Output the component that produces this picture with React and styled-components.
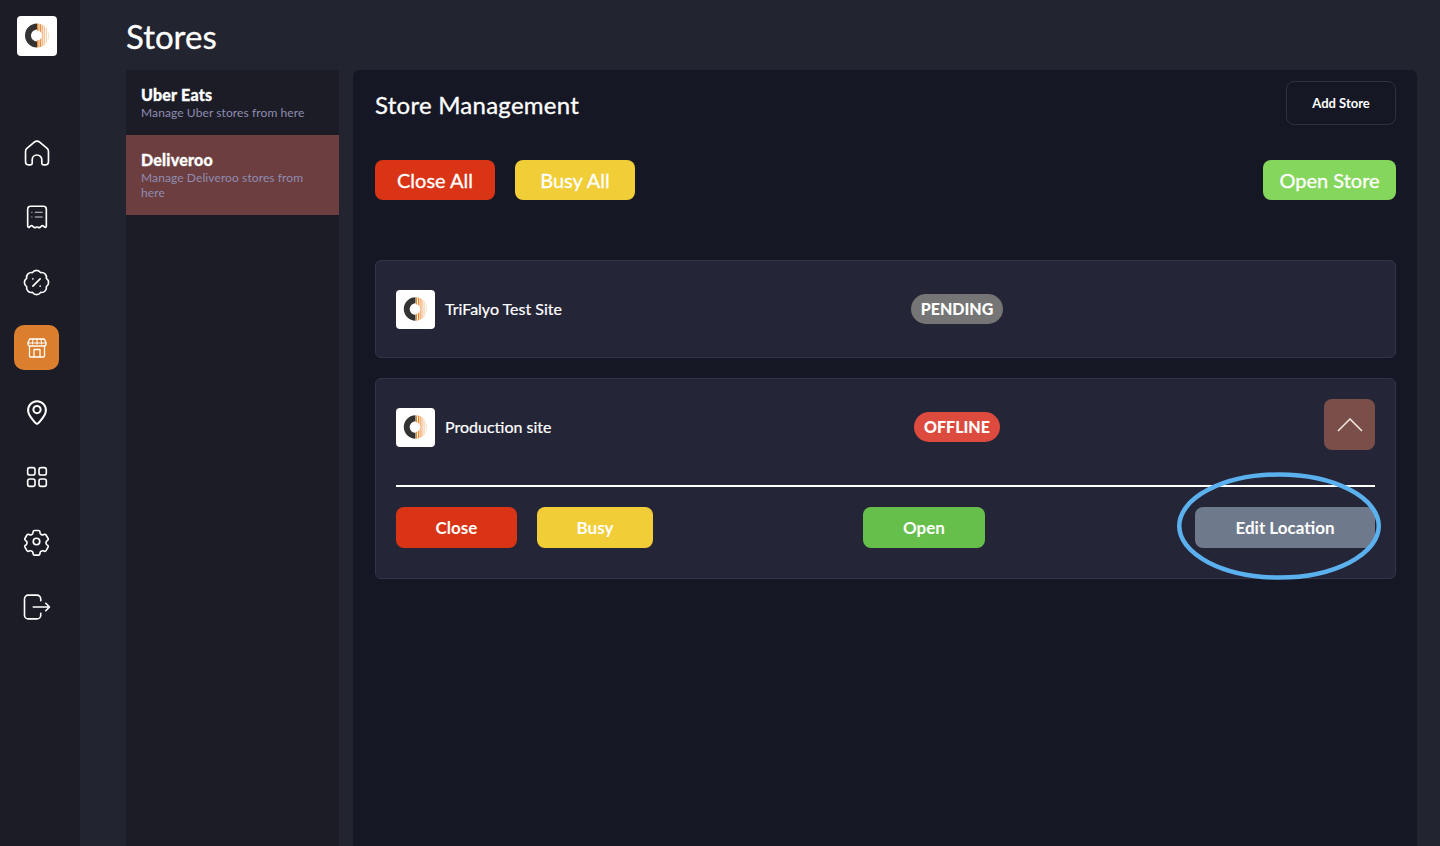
import React from "react";
import styled, { createGlobalStyle } from "styled-components";

const GlobalStyle = createGlobalStyle`
  html, body { margin: 0; padding: 0; height: 100%; background: #22242f; }
  body { font-family: Lato, "Open Sans", sans-serif; overflow: hidden; }
  #root { height: 100%; }
  * { box-sizing: border-box; }
`;

const Logo = ({ size = 40, id = "ring" }) => (
  <LogoBox $size={size}>
    <svg viewBox="0 0 40 40" width={size} height={size}>
      <defs>
        <clipPath id={id}>
          <path d="M20 7.500a12 12 0 0 1 0 24v-7a5 5 0 0 0 0-10z" />
        </clipPath>
      </defs>
      <path d="M20 7.500a12 12 0 0 0 0 24v-6a6 6 0 0 1 0-12z" fill="#333" />
      <g clipPath={`url(#${id})`}>
        <rect x="20" y="7" width="1.600" height="25" fill="#e8872c" />
        <rect x="22.500" y="7" width="1.400" height="25" fill="#e8872c" />
        <rect x="24.400" y="7" width="2" height="25" fill="#f2b98a" />
        <rect x="27" y="7" width="1.200" height="25" fill="#f4c49c" />
        <rect x="29" y="7" width="1" height="25" fill="#f7d3b2" />
        <rect x="31" y="7" width="1" height="25" fill="#f9e0cb" />
      </g>
    </svg>
  </LogoBox>
);

const iconProps = {
  viewBox: "0 0 24 24",
  fill: "none",
  stroke: "currentColor",
  strokeLinecap: "round",
  strokeLinejoin: "round",
};

const HomeIcon = () => (
  <svg {...iconProps} width="32" height="32" strokeWidth="1.250">
    <path d="M4.400 8.600 10 3.900a3.100 3.100 0 0 1 4 0l5.600 4.700c.7.600 1 1.400 1 2.300v7.400c0 1.500-1.100 2.600-2.600 2.600h-1.200c-.7 0-1.200-.5-1.200-1.200v-2.600a3.600 3.600 0 0 0-7.200 0v2.600c0 .7-.5 1.200-1.200 1.200H6c-1.500 0-2.600-1.100-2.600-2.600v-7.400c0-.9.300-1.700 1-2.300z" />
  </svg>
);

const ReceiptIcon = () => (
  <svg {...iconProps} width="28" height="28" strokeWidth="1.400">
    <path d="M6.500 2.800h11A2.500 2.500 0 0 1 20 5.300V20c0 .8-.9 1.200-1.500.7l-.9-.8a1.400 1.400 0 0 0-1.900 0l-.6.6c-.6.600-1.500.800-2.200.3-.5-.3-1.300-.3-1.800 0-.7.500-1.600.300-2.200-.3l-.6-.6a1.400 1.400 0 0 0-1.900 0l-.9.800C5 21.200 4 20.800 4 20V5.300a2.500 2.500 0 0 1 2.500-2.500z" />
    <path d="M10.500 8h6M10.500 12h6M7.500 8h.2M7.500 12h.2" strokeWidth="0.900" opacity="0.8" />
  </svg>
);

const OffersIcon = () => (
  <svg {...iconProps} width="29" height="29" strokeWidth="1.350">
    <path d="M3.850 8.620a4 4 0 0 1 4.780-4.770 4 4 0 0 1 6.740 0 4 4 0 0 1 4.780 4.780 4 4 0 0 1 0 6.740 4 4 0 0 1-4.770 4.780 4 4 0 0 1-6.750 0 4 4 0 0 1-4.780-4.770 4 4 0 0 1 0-6.760z" />
    <path d="m15 9-6 6M9 9h.01M15 15h.01" />
  </svg>
);

const StoreIcon = () => (
  <svg viewBox="0 0 20 20" width="20" height="20" fill="none" stroke="currentColor" strokeWidth="1.300" strokeLinecap="round" strokeLinejoin="round">
    <path d="M3.500 1h13a1.500 1.500 0 0 1 1.400 1L19 5v1a2 2 0 0 1-2 2H3a2 2 0 0 1-2-2V5l1.100-3a1.500 1.500 0 0 1 1.400-1z" />
    <path d="M1 5h18M6 1 5.500 5v1M10 1v5M14 1l.5 4v1" strokeWidth="1" />
    <path d="M2.500 8v10a1 1 0 0 0 1 1h13a1 1 0 0 0 1-1V8M7 19v-7.500h6V19" />
  </svg>
);

const PinIcon = () => (
  <svg {...iconProps} width="30" height="30" strokeWidth="1.600">
    <path d="M12 21.500c-1 0-6.500-6.300-7-9.800a7.100 7.100 0 1 1 14 0c-.5 3.500-6 9.800-7 9.800z" />
    <circle cx="12" cy="10" r="2.900" />
  </svg>
);

const GridIcon = () => (
  <svg {...iconProps} width="28" height="28" strokeWidth="1.400">
    <rect x="4" y="4" width="6.300" height="6.300" rx="1.800" />
    <rect x="13.700" y="4" width="6.300" height="6.300" rx="1.800" />
    <rect x="4" y="13.700" width="6.300" height="6.300" rx="1.800" />
    <rect x="13.700" y="13.700" width="6.300" height="6.300" rx="1.800" />
  </svg>
);

const GearIcon = () => (
  <svg {...iconProps} width="29" height="29" strokeWidth="1.350">
    <circle cx="12" cy="12" r="2.700" />
    <path d="M10.300 2.900h3.400c.6 0 1 .4 1.100 1l.2 1.200c.1.400.3.700.6.900l.7.400c.3.200.7.200 1.100.1l1.100-.4c.5-.2 1.100 0 1.400.5l1.700 2.900c.3.500.2 1.100-.3 1.400l-.9.800c-.3.200-.5.600-.5 1v.8c0 .4.200.8.500 1l.9.800c.5.300.6.900.3 1.400l-1.700 2.900c-.3.500-.9.700-1.400.5l-1.100-.4c-.4-.1-.8-.1-1.100.1l-.7.400c-.3.200-.5.500-.6.900l-.2 1.200c-.1.600-.5 1-1.100 1h-3.400c-.6 0-1-.4-1.100-1l-.2-1.200c-.1-.4-.3-.7-.6-.9l-.7-.4c-.3-.2-.7-.2-1.100-.1l-1.100.4c-.5.200-1.100 0-1.400-.5l-1.700-2.900c-.3-.5-.2-1.100.3-1.400l.9-.8c.3-.2.500-.6.500-1v-.8c0-.4-.2-.8-.5-1l-.9-.8c-.5-.3-.6-.9-.3-1.400l1.700-2.900c.3-.5.9-.7 1.400-.5l1.100.4c.4.100.8.100 1.100-.1l.7-.4c.3-.2.500-.5.600-.9l.2-1.200c.1-.6.500-1 1.100-1z" />
  </svg>
);

const LogoutIcon = () => (
  <svg {...iconProps} width="30" height="30" strokeWidth="1.300">
    <path d="M15 7V5.500a3 3 0 0 0-3-3H5a3 3 0 0 0-3 3v13a3 3 0 0 0 3 3h7a3 3 0 0 0 3-3V17" />
    <path d="M9 12h13M19 9l3 3-3 3" />
  </svg>
);

const navItems = [
  { key: "home", icon: <HomeIcon /> },
  { key: "orders", icon: <ReceiptIcon />, lift: true },
  { key: "offers", icon: <OffersIcon /> },
  { key: "stores", icon: <StoreIcon />, active: true },
  { key: "locations", icon: <PinIcon />, lift: true },
  { key: "apps", icon: <GridIcon />, lift: true },
  { key: "settings", icon: <GearIcon />, lift: true },
  { key: "logout", icon: <LogoutIcon />, lift: true },
];

const stores = [
  { id: 1, name: "TriFalyo Test Site", status: "PENDING", tone: "#757575" },
  { id: 2, name: "Production site", status: "OFFLINE", tone: "#dd4b3e", open: true },
];

export default function App() {
  return (
    <>
      <GlobalStyle />
      <Page>
        <Sidebar>
          <Logo id="ring-main" />
          <Nav>
            {navItems.map((item) => (
              <NavItem key={item.key} $active={item.active} $lift={item.lift}>
                {item.icon}
              </NavItem>
            ))}
          </Nav>
        </Sidebar>
        <Content>
          <Title>Stores</Title>
          <Columns>
            <Platforms>
              <Platform>
                <PlatformName>Uber Eats</PlatformName>
                <PlatformHint>Manage Uber stores from here</PlatformHint>
              </Platform>
              <Platform $active>
                <PlatformName>Deliveroo</PlatformName>
                <PlatformHint>Manage Deliveroo stores from here</PlatformHint>
              </Platform>
            </Platforms>
            <Main>
              <MainHeader>
                <MainTitle>Store Management</MainTitle>
                <AddStore>Add Store</AddStore>
              </MainHeader>
              <BulkRow>
                <BulkGroup>
                  <BulkButton $bg="#d93415">Close All</BulkButton>
                  <BulkButton $bg="#f1cd38">Busy All</BulkButton>
                </BulkGroup>
                <BulkButton $bg="#85d65c" $wide>Open Store</BulkButton>
              </BulkRow>
              <Cards>
                {stores.map((store) => (
                  <Card key={store.id}>
                    <CardRow>
                      <StoreName>
                        <Logo size={39} id={`ring-${store.id}`} />
                        <span>{store.name}</span>
                      </StoreName>
                      <PillCell>
                        <Pill $bg={store.tone}>{store.status}</Pill>
                      </PillCell>
                      {store.open && (
                        <Chevron aria-label="Collapse">
                          <svg width="26" height="14" viewBox="0 0 26 14" fill="none" stroke="#f3e9e4" strokeWidth="1.500">
                            <path d="M1 13 13 1l12 12" />
                          </svg>
                        </Chevron>
                      )}
                    </CardRow>
                    {store.open && (
                      <>
                        <Divider />
                        <ActionRow>
                          <ActionGroup>
                            <ActionButton $bg="#d93415" $w={121}>Close</ActionButton>
                            <ActionButton $bg="#f1cd38" $w={116}>Busy</ActionButton>
                          </ActionGroup>
                          <ActionButton $bg="#66bf4b" $w={122}>Open</ActionButton>
                          <EditWrap>
                            <ActionButton $bg="#6f798c" $w={180}>Edit Location</ActionButton>
                            <Highlight viewBox="0 0 206 110" fill="none">
                              <ellipse cx="103" cy="55" rx="99.750" ry="51.500" stroke="#5bb1ee" strokeWidth="4.500" />
                            </Highlight>
                          </EditWrap>
                        </ActionRow>
                      </>
                    )}
                  </Card>
                ))}
              </Cards>
            </Main>
          </Columns>
        </Content>
      </Page>
    </>
  );
}

const Page = styled.div`
  display: flex;
  height: 846px;
  overflow: hidden;
  color: #fff;
`;

const Sidebar = styled.aside`
  width: 80px;
  flex-shrink: 0;
  background: #1c1c27;
  display: flex;
  flex-direction: column;
  align-items: center;
  padding: 16px 7px 0 0;
`;

const LogoBox = styled.div`
  width: ${(p) => p.$size}px;
  height: ${(p) => p.$size}px;
  flex-shrink: 0;
  background: #fff;
  border-radius: 4px;
  overflow: hidden;
  svg { display: block; }
`;

const Nav = styled.nav`
  margin-top: 74px;
  display: flex;
  flex-direction: column;
  gap: 20px;
`;

const NavItem = styled.div`
  width: 45px;
  height: 45px;
  padding-bottom: ${(p) => (p.$lift ? "2px" : "0")};
  border-radius: 10px;
  display: flex;
  align-items: center;
  justify-content: center;
  color: #fff;
  background: ${(p) => (p.$active ? "#db7f2e" : "transparent")};
`;

const Content = styled.div`
  flex: 1;
  min-width: 0;
  padding: 0 23px 0 46px;
  display: flex;
  flex-direction: column;
`;

const Title = styled.h1`
  margin: 0;
  height: 70px;
  display: flex;
  align-items: center;
  padding-top: 2px;
  font-size: 33px;
  font-weight: 400;
  -webkit-text-stroke: 0.3px #fff;
  color: #fff;
`;

const Columns = styled.div`
  flex: 1;
  display: grid;
  grid-template-columns: 213px 1fr;
  gap: 14px;
`;

const Platforms = styled.div`
  background: #1c1c27;
`;

const Platform = styled.div`
  padding: 16px 15px 15px;
  background: ${(p) => (p.$active ? "#6c3e40" : "transparent")};
`;

const PlatformName = styled.div`
  font-size: 16px;
  line-height: 18px;
  font-weight: 900;
  letter-spacing: 0.2px;
  -webkit-text-stroke: 0.3px #fff;
  color: #fff;
`;

const PlatformHint = styled.div`
  margin-top: 1px;
  font-size: 12px;
  line-height: 15px;
  letter-spacing: 0.1px;
  color: #8f8db0;
`;

const Main = styled.main`
  background: #151824;
  border-radius: 6px 6px 0 0;
  padding: 11px 21px 0 22px;
`;

const MainHeader = styled.div`
  display: flex;
  align-items: center;
  justify-content: space-between;
`;

const MainTitle = styled.h2`
  margin: 0;
  padding-top: 2px;
  font-size: 24px;
  font-weight: 400;
  letter-spacing: 0.25px;
  -webkit-text-stroke: 0.3px #fff;
  color: #fff;
`;

const AddStore = styled.button`
  width: 110px;
  height: 44px;
  border: 1px solid #2f3140;
  border-radius: 8px;
  background: transparent;
  color: #fff;
  font: 700 13px Lato, sans-serif;
`;

const BulkRow = styled.div`
  margin-top: 35px;
  display: flex;
  justify-content: space-between;
`;

const BulkGroup = styled.div`
  display: flex;
  gap: 20px;
`;

const BulkButton = styled.button`
  width: ${(p) => (p.$wide ? "133px" : "120px")};
  height: 40px;
  border: 0;
  border-radius: 8px;
  background: ${(p) => p.$bg};
  color: #fff;
  font: 400 20px Lato, sans-serif;
  -webkit-text-stroke: 0.3px #fff;
`;

const Cards = styled.div`
  margin-top: 60px;
  display: flex;
  flex-direction: column;
  gap: 20px;
`;

const Card = styled.section`
  background: #252538;
  border: 1px solid #33344a;
  border-radius: 6px;
  padding: 20px 20px 19px;
`;

const CardRow = styled.div`
  display: grid;
  grid-template-columns: 465px 192px 1fr;
  align-items: center;
  min-height: 57px;
`;

const StoreName = styled.div`
  display: flex;
  align-items: center;
  gap: 10px;
  font-size: 16px;
  color: #fff;
  -webkit-text-stroke: 0.2px #fff;
  span { padding-bottom: 2px; }
`;

const PillCell = styled.div`
  display: flex;
  justify-content: center;
`;

const Pill = styled.span`
  height: 30px;
  margin-bottom: 1px;
  padding: 0 10px 1px;
  border-radius: 15px;
  display: flex;
  align-items: center;
  background: ${(p) => p.$bg};
  color: #fff;
  font-size: 16px;
  font-weight: 900;
`;

const Chevron = styled.button`
  width: 51px;
  height: 51px;
  justify-self: end;
  align-self: start;
  border: 0;
  border-radius: 8px;
  background: #7a4f4a;
  display: flex;
  align-items: center;
  justify-content: center;
`;

const Divider = styled.hr`
  margin: 29px 0 20px;
  border: 0;
  height: 2px;
  background: #fff;
`;

const ActionRow = styled.div`
  display: grid;
  grid-template-columns: 467px 192px 1fr;
  padding-bottom: 11px;
`;

const ActionGroup = styled.div`
  display: flex;
  gap: 20px;
`;

const ActionButton = styled.button`
  width: ${(p) => p.$w}px;
  height: 41px;
  padding: 0 0 1px;
  border: 0;
  border-radius: 8px;
  background: ${(p) => p.$bg};
  color: #fff;
  font: 700 17px Lato, sans-serif;
`;

const EditWrap = styled.div`
  position: relative;
  justify-self: end;
`;

const Highlight = styled.svg`
  position: absolute;
  left: -19px;
  top: -36px;
  width: 206px;
  height: 110px;
  pointer-events: none;
`;
